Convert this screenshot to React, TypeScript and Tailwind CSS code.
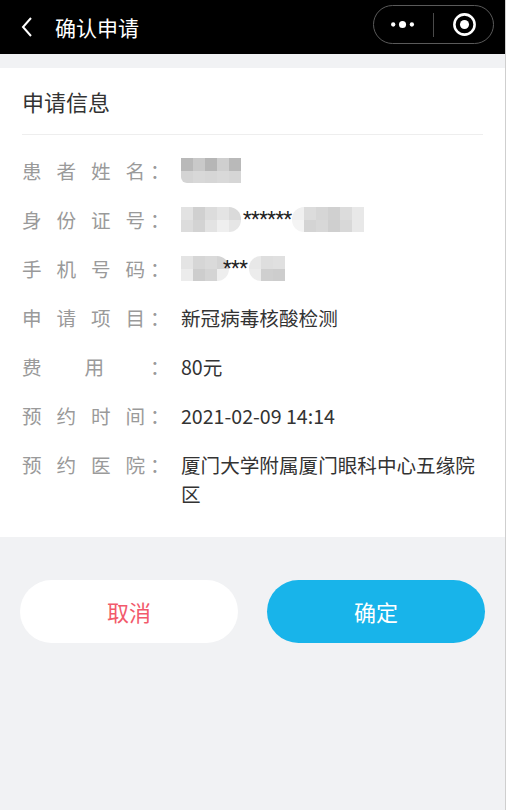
import React from "react";

const font = { fontFamily: '"Noto Sans CJK SC", "Noto Sans", sans-serif' };

type Cells = string[][];

// pixelated blur blocks that hide personal info
function Mosaic({ rows, round }: { rows: Cells; round: string }) {
  return (
    <div className={`flex flex-col overflow-hidden ${round}`}>
      {rows.map((r, i) => (
        <div key={i} className="flex">
          {r.map((c, j) => (
            <div key={j} className="w-[12px] h-[12.5px]" style={{ background: c }} />
          ))}
        </div>
      ))}
    </div>
  );
}

function Label({ chars }: { chars: string[] }) {
  return (
    <div className="flex items-center w-[159px] shrink-0 text-[#9a9a9a]">
      {chars.length === 2 ? (
        <div className="flex w-[123px]">
          <span>{chars[0]}</span>
          <span className="ml-[43px]">{chars[1]}</span>
        </div>
      ) : (
        <div className="flex justify-between w-[123px]">
          {chars.map((c, i) => (
            <span key={i}>{c}</span>
          ))}
        </div>
      )}
      <span className="ml-[5px]">：</span>
    </div>
  );
}

function Row({ label, children }: { label: string[]; children: React.ReactNode }) {
  return (
    <div className="flex items-start leading-[29px] text-[19.6px]">
      <Label chars={label} />
      <div className="flex-1 text-[#333333]">{children}</div>
    </div>
  );
}

export default function App() {
  return (
    <div className="w-[507px] h-[810px] bg-[#f1f2f4] flex overflow-hidden" style={font}>
      <div className="w-[505px] flex flex-col">
        {/* nav bar */}
        <div className="h-[54px] bg-black flex items-center relative shrink-0">
          <svg width="14" height="22" viewBox="0 0 14 22" className="ml-[20px]">
            <path d="M11 2 L3 11 L11 20" fill="none" stroke="#fff" strokeWidth="2" />
          </svg>
          <span className="ml-[21px] text-white text-[21px] leading-none">确认申请</span>
          <div className="absolute left-[373px] top-[5px] w-[121px] h-[39px] rounded-full border border-[#5a5a5a] flex items-center">
            <svg width="60" height="39" viewBox="0 0 60 39">
              <circle cx="19.5" cy="19.5" r="2.2" fill="#fff" />
              <circle cx="29" cy="19.5" r="3.6" fill="#fff" />
              <circle cx="38.5" cy="19.5" r="2.2" fill="#fff" />
            </svg>
            <div className="w-px h-[24px] bg-[#4a4a4a]" />
            <svg width="60" height="39" viewBox="0 0 60 39">
              <circle cx="31" cy="19.5" r="10.3" fill="none" stroke="#fff" strokeWidth="2.6" />
              <circle cx="31" cy="19.5" r="4.6" fill="#fff" />
            </svg>
          </div>
        </div>

        {/* info card */}
        <div className="mt-[14px] bg-white px-[22px] pt-[18px] pb-[29px]">
          <div className="text-[22px] leading-[30px] text-[#333333] pb-[18px] border-b border-[#eeeeee]">
            申请信息
          </div>
          <div className="pt-[21px] flex flex-col gap-[20px]">
            <Row label={["患", "者", "姓", "名"]}>
              <div className="h-[29px] flex items-center">
                <Mosaic
                  round="rounded-bl-[6px]"
                  rows={[
                    ["#b9b9b9", "#c9c9c9", "#b6b6b6", "#cfcfcf", "#b9b9b9"],
                    ["#d4d4d4", "#d8d8d8", "#d6d6d6", "#d9d9d9", "#d6d6d6"],
                  ]}
                />
              </div>
            </Row>
            <Row label={["身", "份", "证", "号"]}>
              <div className="h-[29px] flex items-center">
                <Mosaic
                  round="rounded-r-[12px]"
                  rows={[
                    ["#e2e2e2", "#d0d0d0", "#dcdcdc", "#e4e4e4", "#dadada"],
                    ["#dcdcdc", "#d3d3d3", "#e3e3e3", "#efefef", "#e6e6e6"],
                  ]}
                />
                <span className="text-[#222] text-[20px] ml-[2px] tracking-[-0.5px]" style={{ fontFamily: "Roboto, sans-serif" }}>
                  ******
                </span>
                <Mosaic
                  round="rounded-l-[12px]"
                  rows={[
                    ["#f0f0f0", "#dcdcdc", "#d6d6d6", "#d0d0d0", "#dcdcdc", "#e8e8e8"],
                    ["#f4f4f4", "#d4d4d4", "#d8d8d8", "#cfcfcf", "#d8d8d8", "#e8e8e8"],
                  ]}
                />
              </div>
            </Row>
            <Row label={["手", "机", "号", "码"]}>
              <div className="h-[29px] flex items-center">
                <Mosaic
                  round="rounded-r-[12px]"
                  rows={[
                    ["#e4e4e4", "#d6d6d6", "#dadada", "#d4d4d4"],
                    ["#ececec", "#cdcdcd", "#d4d4d4", "#eeeeee"],
                  ]}
                />
                <span className="text-[#222] text-[20px] -ml-[6px] tracking-[-0.5px] w-[26px] overflow-hidden" style={{ fontFamily: "Roboto, sans-serif" }}>
                  ***
                </span>
                <Mosaic
                  round="rounded-l-[12px]"
                  rows={[
                    ["#e8e8e8", "#dedede", "#e0e0e0"],
                    ["#ececec", "#cfcfcf", "#cdcdcd"],
                  ]}
                />
              </div>
            </Row>
            <Row label={["申", "请", "项", "目"]}>新冠病毒核酸检测</Row>
            <Row label={["费", "用"]}>80元</Row>
            <Row label={["预", "约", "时", "间"]}>2021-02-09 14:14</Row>
            <Row label={["预", "约", "医", "院"]}>厦门大学附属厦门眼科中心五缘院区</Row>
          </div>
        </div>

        {/* actions */}
        <div className="mt-[43px] px-[20px] flex gap-[29px]">
          <button className="w-[218px] h-[63px] rounded-full bg-white text-[#f25a6c] text-[22px]">
            取消
          </button>
          <button className="w-[218px] h-[63px] rounded-full bg-[#18b4ea] text-white text-[22px]">
            确定
          </button>
        </div>
      </div>
      <div className="w-[2px] border-l border-[#cfcfcf] bg-white" />
    </div>
  );
}
